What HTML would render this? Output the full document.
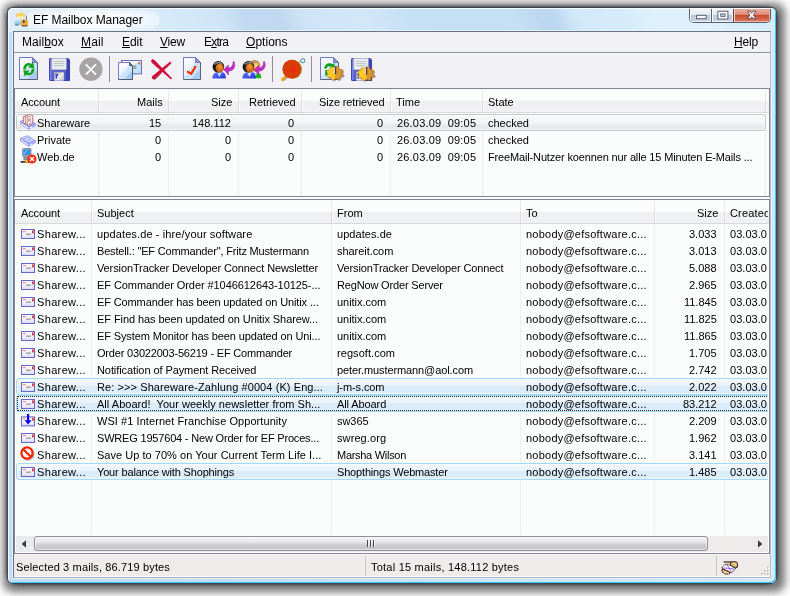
<!DOCTYPE html>
<html><head><meta charset="utf-8"><title>EF Mailbox Manager</title>
<style>
html,body{margin:0;padding:0;}
body{width:790px;height:596px;overflow:hidden;background:#fff;position:relative;font-family:"Liberation Sans",sans-serif;font-size:11px;color:#000;}
div,span,svg{position:absolute;box-sizing:border-box;}
.t{white-space:pre;line-height:14px;will-change:transform;}
u{text-decoration:underline;text-decoration-thickness:1px;text-underline-offset:1px;}
/* shadow */
.sh{left:7px;top:7px;width:770px;height:577px;border-radius:13px;box-shadow:0 0 3px .5px rgba(0,0,0,.45);}
.sh2{left:7px;top:7px;width:770px;height:577px;border-radius:4px;background:rgba(0,0,0,.55);box-shadow:2px 2px 8px 6px rgba(0,0,0,.55);}
/* window frame */
.win{left:7px;top:7px;width:770px;height:577px;border-radius:6px;border:1px solid #3f4852;
  background:#c8e0f5;overflow:hidden;}
.win:before{content:"";position:absolute;left:0;top:0;right:0;bottom:0;border-radius:5px;z-index:3;
  box-shadow:inset 1px 1px 0 #f4fbff, inset -1px -1px 0 #2ccaf8;}
.streak{left:0;top:0;width:768px;height:24px;
  background:linear-gradient(65deg,#deedf9 0,#dcecf8 10%,#d5e9f8 22%,#cfe5f7 28%,#c1daf1 31%,#c0d9f0 36%,#cfe5f7 39%,#d2e7f8 47%,#c6e0f5 52%,#c5dff4 66%,#bcd8f0 69%,#bcd8f0 71%,#d2e9f9 74%,#d6ebfa 80%,#def1fc 84%,#dff2fc 90%,#d8ecf9 94%,#d6eaf8 100%);}
.frameside{left:0;top:24px;width:768px;height:551px;background:linear-gradient(90deg,#c3dcf3 0,#c9e1f6 50%,#d5e8f8 100%);}
.frameinner{left:4px;top:22px;width:760px;height:549px;border:1px solid #e2f2fd;}
.glow{left:18px;top:2px;width:134px;height:20px;border-radius:10px;background:radial-gradient(ellipse at center,rgba(255,255,255,.9) 0,rgba(255,255,255,.78) 50%,rgba(255,255,255,.4) 75%,rgba(255,255,255,0) 100%);}
/* client */
.client{left:13px;top:31px;width:758px;height:547px;background:#f2f2f6;border:1px solid #6d7385;border-right-color:#b4bccb;border-bottom-color:#aab4c3;}
.menuline{left:14px;top:52px;width:756px;height:1px;background:#8e92a0;}
/* lists */
.lv{background:#fbfcfc;border:1px solid #80869a;}
.hdr{background:linear-gradient(180deg,#fcfdfd 0,#fbfcfc 50%,#f0f0f3 51%,#f1f1f4 100%);border-bottom:1px solid #d7dadc;}
.hs{width:2px;background:linear-gradient(180deg,#ebebef 0,#e6e7ec 50%,#d8dce6 52%,#d6dae6 100%);border-right:1px solid #fbfbfd;}
.cs{width:1px;background:#eeeff2;}
.sel0{border:1px solid #c6c8ce;border-radius:3px;background:linear-gradient(180deg,#f9f9fa 0,#f4f4f6 58%,#e9ebed 62%,#e5e7e9 100%);box-shadow:inset 0 0 0 1px rgba(255,255,255,.6);}
.sel{border:1px solid #a5d8f2;border-radius:3px;background:linear-gradient(180deg,#f0f6fc 0,#eaf3fb 49%,#d9eaf9 50%,#deeefa 100%);box-shadow:inset 0 0 0 1px rgba(255,255,255,.5);}
.foc{border:1px dotted #222;border-radius:0;}
/* scrollbar */
.sbtrack{background:#efebea;}
.sbthumb{border:1px solid #8f9096;border-radius:3px;background:linear-gradient(180deg,#f3f3f5 0,#e4e4e7 45%,#d0d1d4 55%,#bfc0c4 100%);box-shadow:inset 0 0 0 1px rgba(255,255,255,.55);}
/* status */
.status{background:#f0ecec;border-top:1px solid #f9f7f7;border-bottom:1px solid #fdfdfd;}
.ssep{width:1px;background:#c9c5c5;}
/* toolbar */
.tsep{width:1px;background:#8f8f95;}
/* caption buttons */
.cap{border:1px solid #5a6472;}

.root{left:0;top:0;width:790px;height:596px;}

</style></head>
<body>
<svg width="0" height="0" style="left:0;top:0"><defs><linearGradient id="gDoc" x1="0" y1="0" x2="1" y2="1"><stop offset="0" stop-color="#ffffff"/><stop offset=".45" stop-color="#f1f3fa"/><stop offset=".46" stop-color="#cfe7fc"/><stop offset="1" stop-color="#bcdcfa"/></linearGradient><linearGradient id="gEnv" x1="0" y1="0" x2="0" y2="1"><stop offset="0" stop-color="#fff6f7"/><stop offset=".6" stop-color="#f4f0fb"/><stop offset="1" stop-color="#d4d6f6"/></linearGradient><linearGradient id="gMetal" x1="0" y1="0" x2="1" y2="1"><stop offset="0" stop-color="#8a8c96"/><stop offset=".5" stop-color="#f4f4f4"/><stop offset="1" stop-color="#b9bbc2"/></linearGradient><radialGradient id="gFace" cx=".55" cy=".35" r=".7"><stop offset="0" stop-color="#f59a30"/><stop offset=".6" stop-color="#d8701a"/><stop offset="1" stop-color="#9a4a0c"/></radialGradient><radialGradient id="gFace2" cx=".55" cy=".35" r=".7"><stop offset="0" stop-color="#ffe08a"/><stop offset=".6" stop-color="#f0a840"/><stop offset="1" stop-color="#c07018"/></radialGradient><linearGradient id="gBody" x1="0" y1="0" x2="1" y2="1"><stop offset="0" stop-color="#6a78ff"/><stop offset="1" stop-color="#2434d8"/></linearGradient><linearGradient id="gGear" x1="0" y1="0" x2="1" y2="0"><stop offset="0" stop-color="#ffcf28"/><stop offset=".5" stop-color="#ffc420"/><stop offset=".52" stop-color="#dda032"/><stop offset="1" stop-color="#cf8a2c"/></linearGradient></defs></svg><div class="sh2"></div><div class="sh"></div><div class="win"><div class="frameside"></div><div class="streak"></div><div class="frameinner"></div><div class="glow"></div></div><svg style="left:14px;top:11.6px" width="15" height="15" viewBox="0 0 15 15" ><path d="M.6 6.2 L6.2 1 L11 5.6 V9.4 L.6 12.8Z" fill="#dcf1fc"/><path d="M.7 8.6 L6.6 8.8 V13 L1 13Z" fill="#8cc2f2"/><path d="M.7 8.6 H6.6 V10.4 H.7Z" fill="#b4dcf8"/><path d="M1.2 13 H4.4" stroke="#5a6068" stroke-width="1"/><ellipse cx="6.3" cy="3.4" rx="4.8" ry="3" fill="#f8d468"/><path d="M3 4.6 H9.4 V5.9 H3Z" fill="#fffbea"/><path d="M4 1.4 L6 .6" stroke="#fff2c0" stroke-width=".8"/><path d="M12.4 3.8 V8.4" stroke="#6a7088" stroke-width="1"/><rect x="6.8" y="7.8" width="7.2" height="6.2" rx="1.6" fill="#f2a83a"/><rect x="9" y="7.8" width="1.6" height="3.2" fill="#3a4a6a"/><path d="M7.8 13.9 H13.4" stroke="#2a2418" stroke-width="1" opacity=".85"/></svg><span class="t" style="left:32.60px;top:13.00px;font-size:12px;letter-spacing:-0.062px;">EF Mailbox Manager</span><div style="left:689px;top:8px;width:82px;height:15px;border-radius:0 0 5px 5px;border:1px solid #566070;border-top:none;overflow:hidden;background:#fff"><div style="left:0;top:0;width:21px;height:14px;background:linear-gradient(180deg,#f3f6fa 0,#e6ebf2 46%,#b9c7d8 50%,#c9d5e3 100%);box-shadow:inset 1px 0 0 #fbfcfe,inset -1px -1px 0 #f4f7fa"></div><div style="left:22px;top:0;width:21px;height:14px;background:linear-gradient(180deg,#f3f6fa 0,#e6ebf2 46%,#b9c7d8 50%,#c9d5e3 100%);box-shadow:inset 1px 0 0 #fbfcfe,inset -1px -1px 0 #f4f7fa"></div><div style="left:44px;top:0;width:36px;height:14px;background:linear-gradient(180deg,#eeb4a8 0,#de8c7c 46%,#c64a2e 50%,#cf5a3e 70%,#dc7e66 100%);box-shadow:inset 1px 0 0 #f6d2ca,inset -1px -1px 0 #ecb4a6"></div><div style="left:21px;top:0;width:1px;height:14px;background:#566070"></div><div style="left:43px;top:0;width:1px;height:14px;background:#6a3a34"></div></div><svg style="left:690px;top:8px" width="81" height="14" viewBox="0 0 81 14"><rect x="6.5" y="7.3" width="9.6" height="3.4" fill="#fff" stroke="#5a6270" stroke-width="1"/><rect x="27.9" y="3.2" width="10" height="7.8" fill="#fff" stroke="#5a6270" stroke-width="1"/><rect x="30.7" y="5.9" width="4.4" height="2.5" fill="#c3cfdd" stroke="#5a6270" stroke-width=".9"/><path d="M57.4 3.2 H60.4 L61.7 5.2 L63 3.2 H66 L63.4 7 L66 10.8 H63 L61.7 8.8 L60.4 10.8 H57.4 L60 7Z" fill="#fff" stroke="#5a4a52" stroke-width=".9" stroke-linejoin="round"/></svg><div class="client"></div><div class="menuline"></div><span class="t" style="left:21.60px;top:35px;font-size:12px;letter-spacing:0.06px">Mail<u>b</u>ox</span><span class="t" style="left:81.00px;top:35px;font-size:12px;letter-spacing:0.15px"><u>M</u>ail</span><span class="t" style="left:122.00px;top:35px;font-size:12px;letter-spacing:-0.07px"><u>E</u>dit</span><span class="t" style="left:160.00px;top:35px;font-size:12px;letter-spacing:-0.20px"><u>V</u>iew</span><span class="t" style="left:203.60px;top:35px;font-size:12px;letter-spacing:-0.75px">E<u>x</u>tra</span><span class="t" style="left:246.00px;top:35px;font-size:12px;letter-spacing:0.03px"><u>O</u>ptions</span><span class="t" style="left:734.40px;top:35px;font-size:12px;letter-spacing:-0.17px"><u>H</u>elp</span><div class="tsep" style="left:109px;top:56px;height:26px"></div><div class="tsep" style="left:272px;top:56px;height:26px"></div><div class="tsep" style="left:311px;top:56px;height:26px"></div><svg style="left:19px;top:57px" width="19" height="23" viewBox="0 0 19 23" ><path d="M.5 .5H13.5 L18.5 5.5 V22.5 H.5Z" fill="url(#gDoc)" stroke="#7478c4" stroke-width="1"/><path d="M0 0 L0 0" stroke="#a4c6f2" stroke-width="0"/><path d="M18 12.65 L18 22 L8.55 22Z" fill="#a9cbf5"/><path d="M13.5 .5 V5.5 H18.5Z" fill="#8a8fd8" stroke="#6a6ebc" stroke-width=".8"/><path d="M18.5 5.5 V22.5 H.5" fill="none" stroke="#5c6078" stroke-width="1"/><path d="M4.3 12.6 C4 7.2 9 4.6 12.4 7 L13.8 4.6 L15.4 11.2 L9.2 10.6 L10.8 8.8 C9 7.8 6.9 9 6.9 12.6Z" fill="#10a01c"/><path d="M15.3 11.8 C15.6 17.2 10.6 19.8 7.2 17.4 L5.8 19.8 L4.2 13.2 L10.4 13.8 L8.8 15.6 C10.6 16.6 12.7 15.4 12.7 11.8Z" fill="#10a01c"/></svg><svg style="left:49px;top:57.5px" width="22" height="23" viewBox="0 0 22 23" ><g transform="scale(.955,1)"><path d="M1.2 .5H20 L21.5 2 V22.5 H1.2 Q.5 22.5 .5 21.8 V1.2Q.5 .5 1.2 .5Z" fill="#5a62cc" stroke="#3a3eaa" stroke-width="1"/><rect x="17.6" y="1" width="3.4" height="21" fill="#3c42b0"/><rect x="1" y="1" width="1.6" height="21" fill="#7880e4"/><rect x="3" y=".5" width="15" height="11" fill="#e9edef" stroke="#c7cbd0" stroke-width=".6"/><path d="M5 3.6H16M5 5.6H16M5 7.6H16" stroke="#b9bcc2" stroke-width=".9"/><rect x="6" y="14.5" width="9.4" height="8" fill="url(#gMetal)" stroke="#d8d8dc" stroke-width=".5"/><path d="M7 16 H9.6 L8 21 H7Z" fill="#3a44d8"/></g></svg><svg style="left:78.6px;top:56.6px" width="24" height="25" viewBox="0 0 24 25" ><circle cx="11.9" cy="12.2" r="11.6" fill="#a6a4a4"/><path d="M6.8 7.4 L17 17.6 M17 7.4 L6.8 17.6" stroke="#fff" stroke-width="1.9"/></svg><svg style="left:118px;top:60px" width="25" height="21" viewBox="0 0 25 21" ><rect x="3.5" y=".5" width="20" height="13.4" fill="url(#gDoc)" stroke="#6b6dba"/><rect x="20.2" y="2.4" width="2" height="2" fill="#e85a20"/><path d="M15 6.2H18.4M15 8.2H18.4" stroke="#6a6a72" stroke-width=".9"/><path d="M.5 2.5H11.5 L14.5 5.5 V19.5 H.5Z" fill="url(#gDoc)" stroke="#7a7cc8"/><path d="M14 11 V19 H7Z" fill="#a6c9f5"/><path d="M11.5 2.5 V5.5 H14.5Z" fill="#3a80e8" stroke="#4a4e5c" stroke-width=".9"/><path d="M14.5 5.5 V19.5 H.5" fill="none" stroke="#555a6c" stroke-width="1"/></svg><svg style="left:150px;top:58px" width="23" height="23" viewBox="0 0 23 23" ><path d="M1.2 2.8 C1.3 1.2 3.2 .8 4.2 1.8 L22.2 20.4 L21 21.6 L2 5 C1.4 4.4 1.1 3.6 1.2 2.8Z" fill="#d40a3c"/><path d="M20.2 3.6 L21.4 4.8 L5.8 20.4 C4.8 21.6 3 21.8 2.2 20.6 C1.5 19.6 2 18.4 2.8 17.8Z" fill="#d40a3c"/><path d="M4 21.4 L6.4 20.4 L11.6 15" stroke="#5a2a34" stroke-width=".8" fill="none" opacity=".6"/><path d="M21.4 5.2 L16.4 10.2" stroke="#5a2a34" stroke-width=".7" fill="none" opacity=".6"/></svg><svg style="left:183px;top:57px" width="18" height="23" viewBox="0 0 18 23" ><path d="M.5 .5H12.5 L17.5 5.5 V22.5 H.5Z" fill="url(#gDoc)" stroke="#7478c4" stroke-width="1"/><path d="M0 0 L0 0" stroke="#a4c6f2" stroke-width="0"/><path d="M17 12.65 L17 22 L8.1 22Z" fill="#a9cbf5"/><path d="M12.5 .5 V5.5 H17.5Z" fill="#8a8fd8" stroke="#6a6ebc" stroke-width=".8"/><path d="M17.5 5.5 V22.5 H.5" fill="none" stroke="#5c6078" stroke-width="1"/><path d="M4 14.4 L8.2 16.8 L12.8 9" fill="none" stroke="#ff2c00" stroke-width="2.2"/></svg><svg style="left:211.6px;top:60.8px" width="24" height="19" viewBox="0 0 24 19" ><g transform="translate(0,0)"><path d="M.4 17.6 C.4 13.4 2.4 11.4 6 11 H9.6 C12.6 11.4 13.8 13.4 13.8 17.6Z" fill="url(#gBody)"/><path d="M5 11 L7.4 16 L9.8 11Z" fill="#cfe6ff"/><circle cx="6.4" cy="5.8" r="5.8" fill="#161616"/><path d="M2.6 3.4 C4 1.2 8 1 10 2.6" stroke="#9a9a9a" stroke-width="1.3" fill="none"/><ellipse cx="7.6" cy="7" rx="4" ry="4.6" fill="url(#gFace)"/></g><g transform="translate(11.8,0.4)"><path d="M10.2 0 C12.6 5.4 9.4 9.6 4.6 9.8 V13.6 L0 8.2 L4.6 3.6 V6.6 C8 6.4 9.6 4 9.2 .4Z" fill="#c22cc2" stroke="#a020a8" stroke-width=".5"/></g></svg><svg style="left:241.8px;top:59.8px" width="25" height="20" viewBox="0 0 25 20" ><path d="M12 18.2 V13 H15.6 C18 13 19.4 14.6 19.4 18.2Z" fill="#18b41c"/><g transform="translate(6.2,0)"><path d="M.4 17.6 C.4 13.4 2.4 11.4 6 11 H9.6 C12.6 11.4 13.8 13.4 13.8 17.6Z" fill="none"/><path d="M5 11 L7.4 16 L9.8 11Z" fill="#cfe6ff"/><circle cx="6.4" cy="5.8" r="5.8" fill="#c88a30"/><path d="M2.6 3.4 C4 1.2 8 1 10 2.6" stroke="#9a9a9a" stroke-width="1.3" fill="none"/><ellipse cx="7.6" cy="7" rx="4" ry="4.6" fill="url(#gFace2)"/></g><g transform="translate(0,1)"><path d="M.4 17.6 C.4 13.4 2.4 11.4 6 11 H9.6 C12.6 11.4 13.8 13.4 13.8 17.6Z" fill="url(#gBody)"/><path d="M5 11 L7.4 16 L9.8 11Z" fill="#cfe6ff"/><circle cx="6.4" cy="5.8" r="5.8" fill="#161616"/><path d="M2.6 3.4 C4 1.2 8 1 10 2.6" stroke="#9a9a9a" stroke-width="1.3" fill="none"/><ellipse cx="7.6" cy="7" rx="4" ry="4.6" fill="url(#gFace)"/></g><g transform="translate(12.2,1.4)"><path d="M10.2 0 C12.6 5.4 9.4 9.6 4.6 9.8 V13.6 L0 8.2 L4.6 3.6 V6.6 C8 6.4 9.6 4 9.2 .4Z" fill="#c22cc2" stroke="#a020a8" stroke-width=".5"/></g></svg><svg style="left:280.6px;top:57.6px" width="25" height="24" viewBox="0 0 25 24" ><path d="M7.2 16.4 L1.7 21.6" stroke="#f5a522" stroke-width="3.2" stroke-linecap="round"/><path d="M8 17.6 L2.8 22.6" stroke="#8878a0" stroke-width=".9"/><circle cx="11.2" cy="11.4" r="9.7" fill="#b27a1c"/><circle cx="10.7" cy="10.9" r="9.2" fill="#d83c04"/><circle cx="13.4" cy="9.4" r="1.5" fill="#ff1e1e" opacity=".85"/><circle cx="11.4" cy="12.4" r="1.6" fill="#ff1e1e" opacity=".85"/><circle cx="14" cy="12.6" r="1.2" fill="#ff1e1e" opacity=".8"/><circle cx="9" cy="11.6" r="1" fill="#ff1e1e" opacity=".7"/><path d="M17.8 4.6 L20.4 2.4" stroke="#8a8a90" stroke-width=".8"/><circle cx="21.8" cy="2.7" r="2.1" fill="#f4fbff" stroke="#2b7c8c" stroke-width=".9"/></svg><svg style="left:320px;top:57px" width="26" height="25" viewBox="0 0 26 25" ><path d="M.5 .5H13.5 L18.5 5.5 V22.5 H.5Z" fill="url(#gDoc)" stroke="#7478c4" stroke-width="1"/><path d="M0 0 L0 0" stroke="#a4c6f2" stroke-width="0"/><path d="M18 12.65 L18 22 L8.55 22Z" fill="#a9cbf5"/><path d="M13.5 .5 V5.5 H18.5Z" fill="#8a8fd8" stroke="#6a6ebc" stroke-width=".8"/><path d="M18.5 5.5 V22.5 H.5" fill="none" stroke="#5c6078" stroke-width="1"/><path d="M4.2 11.6 C4.6 7 9.4 4.8 13.2 7.6 L14.6 5.8 V11.6 H9.4 L11 9.8 C9 8.6 6.8 9.6 6.4 11.8Z" fill="#10a01c"/><path d="M5.2 13 H7.6 V18.6 H5.2Z" fill="#10a01c"/><path d="M23.14 17.59 L22.67 18.83 L20.52 19.23 L19.70 20.03 L19.61 21.79 L18.18 22.40 L16.30 21.48 L15.00 21.58 L13.38 22.77 L11.82 22.40 L11.31 20.69 L10.30 20.03 L8.10 19.97 L7.33 18.83 L8.49 17.33 L8.36 16.30 L6.86 15.01 L7.33 13.77 L9.48 13.37 L10.30 12.57 L10.39 10.81 L11.82 10.20 L13.70 11.12 L15.00 11.02 L16.62 9.83 L18.18 10.20 L18.69 11.91 L19.70 12.57 L21.90 12.63 L22.67 13.77 L21.51 15.27 L21.64 16.30Z" fill="#4a4038" stroke="#4a4038" stroke-width="1" stroke-linejoin="round" opacity=".5" transform="translate(1.1,1)"/><path d="M23.14 17.59 L22.67 18.83 L20.52 19.23 L19.70 20.03 L19.61 21.79 L18.18 22.40 L16.30 21.48 L15.00 21.58 L13.38 22.77 L11.82 22.40 L11.31 20.69 L10.30 20.03 L8.10 19.97 L7.33 18.83 L8.49 17.33 L8.36 16.30 L6.86 15.01 L7.33 13.77 L9.48 13.37 L10.30 12.57 L10.39 10.81 L11.82 10.20 L13.70 11.12 L15.00 11.02 L16.62 9.83 L18.18 10.20 L18.69 11.91 L19.70 12.57 L21.90 12.63 L22.67 13.77 L21.51 15.27 L21.64 16.30Z" fill="url(#gGear)" stroke="url(#gGear)" stroke-width="1" stroke-linejoin="round"/><path d="M23.14 17.59 L22.67 18.83 L20.52 19.23 L19.70 20.03 L19.61 21.79 L18.18 22.40 L16.30 21.48 L15.00 21.58 L13.38 22.77 L11.82 22.40 L11.31 20.69 L10.30 20.03 L8.10 19.97 L7.33 18.83 L8.49 17.33 L8.36 16.30 L6.86 15.01 L7.33 13.77 L9.48 13.37 L10.30 12.57 L10.39 10.81 L11.82 10.20 L13.70 11.12 L15.00 11.02 L16.62 9.83 L18.18 10.20 L18.69 11.91 L19.70 12.57 L21.90 12.63 L22.67 13.77 L21.51 15.27 L21.64 16.30Z" fill="none" stroke="#b4552a" stroke-width=".5" stroke-linejoin="round" opacity=".55" transform="translate(15.00,16.30) scale(1.06) translate(-15.00,-16.30)"/><rect x="14.80" y="9.30" width="1.5" height="7.80" fill="#6a3420"/><rect x="13.50" y="10.30" width="1.3" height="6.00" fill="#dcdcde"/></svg><svg style="left:351px;top:57.5px" width="26" height="25" viewBox="0 0 26 25" ><g transform="scale(.955,1)"><path d="M1.2 .5H20 L21.5 2 V22.5 H1.2 Q.5 22.5 .5 21.8 V1.2Q.5 .5 1.2 .5Z" fill="#5a62cc" stroke="#3a3eaa" stroke-width="1"/><rect x="17.6" y="1" width="3.4" height="21" fill="#3c42b0"/><rect x="1" y="1" width="1.6" height="21" fill="#7880e4"/><rect x="3" y=".5" width="15" height="11" fill="#e9edef" stroke="#c7cbd0" stroke-width=".6"/><path d="M5 3.6H16M5 5.6H16M5 7.6H16" stroke="#b9bcc2" stroke-width=".9"/><rect x="6" y="14.5" width="9.4" height="8" fill="url(#gMetal)" stroke="#d8d8dc" stroke-width=".5"/><path d="M7 16 H9.6 L8 21 H7Z" fill="#3a44d8"/></g><path d="M23.14 17.09 L22.67 18.33 L20.52 18.73 L19.70 19.53 L19.61 21.29 L18.18 21.90 L16.30 20.98 L15.00 21.08 L13.38 22.27 L11.82 21.90 L11.31 20.19 L10.30 19.53 L8.10 19.47 L7.33 18.33 L8.49 16.83 L8.36 15.80 L6.86 14.51 L7.33 13.27 L9.48 12.87 L10.30 12.07 L10.39 10.31 L11.82 9.70 L13.70 10.62 L15.00 10.52 L16.62 9.33 L18.18 9.70 L18.69 11.41 L19.70 12.07 L21.90 12.13 L22.67 13.27 L21.51 14.77 L21.64 15.80Z" fill="#4a4038" stroke="#4a4038" stroke-width="1" stroke-linejoin="round" opacity=".5" transform="translate(1.1,1)"/><path d="M23.14 17.09 L22.67 18.33 L20.52 18.73 L19.70 19.53 L19.61 21.29 L18.18 21.90 L16.30 20.98 L15.00 21.08 L13.38 22.27 L11.82 21.90 L11.31 20.19 L10.30 19.53 L8.10 19.47 L7.33 18.33 L8.49 16.83 L8.36 15.80 L6.86 14.51 L7.33 13.27 L9.48 12.87 L10.30 12.07 L10.39 10.31 L11.82 9.70 L13.70 10.62 L15.00 10.52 L16.62 9.33 L18.18 9.70 L18.69 11.41 L19.70 12.07 L21.90 12.13 L22.67 13.27 L21.51 14.77 L21.64 15.80Z" fill="url(#gGear)" stroke="url(#gGear)" stroke-width="1" stroke-linejoin="round"/><path d="M23.14 17.09 L22.67 18.33 L20.52 18.73 L19.70 19.53 L19.61 21.29 L18.18 21.90 L16.30 20.98 L15.00 21.08 L13.38 22.27 L11.82 21.90 L11.31 20.19 L10.30 19.53 L8.10 19.47 L7.33 18.33 L8.49 16.83 L8.36 15.80 L6.86 14.51 L7.33 13.27 L9.48 12.87 L10.30 12.07 L10.39 10.31 L11.82 9.70 L13.70 10.62 L15.00 10.52 L16.62 9.33 L18.18 9.70 L18.69 11.41 L19.70 12.07 L21.90 12.13 L22.67 13.27 L21.51 14.77 L21.64 15.80Z" fill="none" stroke="#b4552a" stroke-width=".5" stroke-linejoin="round" opacity=".55" transform="translate(15.00,15.80) scale(1.06) translate(-15.00,-15.80)"/><rect x="14.80" y="8.80" width="1.5" height="7.80" fill="#6a3420"/><rect x="13.50" y="9.80" width="1.3" height="6.00" fill="#dcdcde"/></svg><div class="lv" style="left:14px;top:88px;width:756px;height:109px"></div><div class="hdr" style="left:15px;top:89px;width:754px;height:24px"></div><div class="hs" style="left:98px;top:89px;height:23px"></div><div class="cs" style="left:98px;top:113px;height:83px"></div><div class="hs" style="left:168px;top:89px;height:23px"></div><div class="cs" style="left:168px;top:113px;height:83px"></div><div class="hs" style="left:238px;top:89px;height:23px"></div><div class="cs" style="left:238px;top:113px;height:83px"></div><div class="hs" style="left:301px;top:89px;height:23px"></div><div class="cs" style="left:301px;top:113px;height:83px"></div><div class="hs" style="left:390px;top:89px;height:23px"></div><div class="cs" style="left:390px;top:113px;height:83px"></div><div class="hs" style="left:482px;top:89px;height:23px"></div><div class="cs" style="left:482px;top:113px;height:83px"></div><div class="hs" style="left:765px;top:89px;height:23px"></div><div class="cs" style="left:765px;top:113px;height:83px"></div><span class="t" style="left:20.90px;top:95.00px;font-size:11px;letter-spacing:-0.107px;">Account</span><span class="t" style="left:137.23px;top:95.00px;font-size:11px;">Mails</span><span class="t" style="left:211.49px;top:95.00px;font-size:11px;">Size</span><span class="t" style="left:249.25px;top:95.00px;font-size:11px;letter-spacing:-0.053px;">Retrieved</span><span class="t" style="left:319.37px;top:95.00px;font-size:11px;letter-spacing:-0.133px;">Size retrieved</span><span class="t" style="left:396.30px;top:95.00px;font-size:11px;">Time</span><span class="t" style="left:488.00px;top:95.00px;font-size:11px;">State</span><div class="sel0" style="left:16px;top:114px;width:750px;height:17px"></div><svg style="left:20px;top:114px" width="17" height="17" viewBox="0 0 17 17" ><g transform="translate(0,4.1)"><path d="M0 2.9 L7.5 .2 L15.9 5.4 V8 L8.4 11.7 L0 6Z" fill="#9a9cff"/><path d="M1.6 3.2 L7.4 1.2 L14 5.3 L8.4 7.6Z" fill="#c4dcfb"/><path d="M3.6 3.6 L7.6 2.2 L11.4 4.4 L7.6 6Z" fill="#a4a8ff"/><path d="M5.4 3.9 L7.7 3.1 L9.6 4.2 L7.6 5Z" fill="#dcecff"/><path d="M.8 4.3 L8 9.2 V10.6 L.8 5.6Z" fill="#eef4ff"/><path d="M9 9.3 L15.2 6.3 V7.4 L9 10.6Z" fill="#b9bcff"/><path d="M10 9.4 L12 8.5 V9.4 L10 10.3Z" fill="#fff"/></g><path d="M3.3 2.6 L6.4 1.4 L10.4 .5 L12.8 1.6 V9.6 L8.6 11 L3.3 9Z" fill="#fdf8f8" stroke="#b06464" stroke-width=".9"/><path d="M5.3 2 V9.6 M7.2 1.4 V10.2" stroke="#b06464" stroke-width=".8" fill="none"/><path d="M7.2 3 L10.6 2.2 V9.8" stroke="#c08a8a" stroke-width=".7" fill="none"/><path d="M9 4.6 V7.4" stroke="#d23a7a" stroke-width="1"/></svg><svg style="left:20px;top:135px" width="17" height="12" viewBox="0 0 17 12" ><g transform="translate(0,0)"><path d="M0 2.9 L7.5 .2 L15.9 5.4 V8 L8.4 11.7 L0 6Z" fill="#9a9cff"/><path d="M1.6 3.2 L7.4 1.2 L14 5.3 L8.4 7.6Z" fill="#c4dcfb"/><path d="M3.6 3.6 L7.6 2.2 L11.4 4.4 L7.6 6Z" fill="#a4a8ff"/><path d="M5.4 3.9 L7.7 3.1 L9.6 4.2 L7.6 5Z" fill="#dcecff"/><path d="M.8 4.3 L8 9.2 V10.6 L.8 5.6Z" fill="#eef4ff"/><path d="M9 9.3 L15.2 6.3 V7.4 L9 10.6Z" fill="#b9bcff"/><path d="M10 9.4 L12 8.5 V9.4 L10 10.3Z" fill="#fff"/></g></svg><svg style="left:20px;top:148px" width="17" height="16" viewBox="0 0 17 16" ><rect x="2.6" y=".6" width="8.4" height="8" rx="1" fill="#9aa2b4" stroke="#6a7288" stroke-width=".7"/><rect x="3.6" y="1.6" width="6.4" height="5.4" fill="#2a92f2"/><path d="M4 6 L7 2.4" stroke="#9ad4ff" stroke-width="1"/><rect x="3.4" y="9" width="6" height="3.4" fill="#8a8ea0"/><rect x=".6" y="13" width="11" height="1.8" fill="#3c3c44"/><rect x="5" y="12" width="3" height="2.6" fill="#f0b020"/><circle cx="12" cy="11" r="4.6" fill="#ff2a12"/><path d="M10 9 L14 13 M14 9 L10 13" stroke="#fff" stroke-width="1.5"/></svg><span class="t" style="left:36.70px;top:116.00px;font-size:11px;">Shareware</span><span class="t" style="left:148.65px;top:116.00px;font-size:11px;">15</span><span class="t" style="left:192.35px;top:116.00px;font-size:11px;">148.112</span><span class="t" style="left:287.77px;top:116.00px;font-size:11px;">0</span><span class="t" style="left:376.77px;top:116.00px;font-size:11px;">0</span><span class="t" style="left:396.60px;top:116.00px;font-size:11px;letter-spacing:0.182px;">26.03.09  09:05</span><span class="t" style="left:488.00px;top:116.00px;font-size:11px;">checked</span><span class="t" style="left:36.70px;top:133.00px;font-size:11px;">Private</span><span class="t" style="left:154.78px;top:133.00px;font-size:11px;">0</span><span class="t" style="left:225.18px;top:133.00px;font-size:11px;">0</span><span class="t" style="left:287.77px;top:133.00px;font-size:11px;">0</span><span class="t" style="left:376.77px;top:133.00px;font-size:11px;">0</span><span class="t" style="left:396.60px;top:133.00px;font-size:11px;letter-spacing:0.182px;">26.03.09  09:05</span><span class="t" style="left:488.00px;top:133.00px;font-size:11px;">checked</span><span class="t" style="left:36.70px;top:150.00px;font-size:11px;">Web.de</span><span class="t" style="left:154.78px;top:150.00px;font-size:11px;">0</span><span class="t" style="left:225.18px;top:150.00px;font-size:11px;">0</span><span class="t" style="left:287.77px;top:150.00px;font-size:11px;">0</span><span class="t" style="left:376.77px;top:150.00px;font-size:11px;">0</span><span class="t" style="left:396.60px;top:150.00px;font-size:11px;letter-spacing:0.182px;">26.03.09  09:05</span><span class="t" style="left:488.00px;top:150.00px;font-size:11px;letter-spacing:-0.151px;">FreeMail-Nutzer koennen nur alle 15 Minuten E-Mails ...</span><div style="left:15px;top:197px;width:755px;height:2px;background:#fdfdfe"></div><div class="lv" style="left:14px;top:199px;width:756px;height:355px"></div><div class="hdr" style="left:15px;top:200px;width:754px;height:24px"></div><div class="hs" style="left:91px;top:200px;height:23px"></div><div class="cs" style="left:91px;top:224px;height:311px"></div><div class="hs" style="left:331px;top:200px;height:23px"></div><div class="cs" style="left:331px;top:224px;height:311px"></div><div class="hs" style="left:520px;top:200px;height:23px"></div><div class="cs" style="left:520px;top:224px;height:311px"></div><div class="hs" style="left:654px;top:200px;height:23px"></div><div class="cs" style="left:654px;top:224px;height:311px"></div><div class="hs" style="left:724px;top:200px;height:23px"></div><div class="cs" style="left:724px;top:224px;height:311px"></div><span class="t" style="left:20.90px;top:206.00px;font-size:11px;letter-spacing:-0.107px;">Account</span><span class="t" style="left:96.90px;top:206.00px;font-size:11px;">Subject</span><span class="t" style="left:337.00px;top:206.00px;font-size:11px;">From</span><span class="t" style="left:526.00px;top:206.00px;font-size:11px;">To</span><span class="t" style="left:697.49px;top:206.00px;font-size:11px;">Size</span><div style="left:725px;top:200px;width:43px;height:24px;overflow:hidden"><span class="t" style="left:5.10px;top:6.00px;font-size:11px;letter-spacing:0.151px;">Created</span></div><div style="left:15px;top:224px;width:753px;height:311px;overflow:hidden"><div class="sel" style="left:1px;top:154px;width:770px;height:17px"></div><div class="sel" style="left:1px;top:171px;width:770px;height:17px"></div><div class="sel" style="left:1px;top:239px;width:770px;height:17px"></div><div class="foc" style="left:2px;top:172px;width:770px;height:15px"></div></div><svg style="left:21px;top:229px" width="14" height="10" viewBox="0 0 14 10" ><rect x=".5" y=".5" width="13" height="9" fill="url(#gEnv)" stroke="#6668cc"/><rect x="11" y="1.4" width="1.8" height="3" fill="#e23c3c"/><rect x="2" y="2" width="2.6" height="1.2" fill="#f28a8a"/><rect x="5" y="4.6" width="5" height="1.1" fill="#8a8a90"/></svg><span class="t" style="left:36.70px;top:227.00px;font-size:11px;letter-spacing:0.349px;">Sharew...</span><span class="t" style="left:96.90px;top:227.00px;font-size:11px;letter-spacing:0.121px;">updates.de - ihre/your software</span><span class="t" style="left:337.00px;top:227.00px;font-size:11px;letter-spacing:0.056px;">updates.de</span><span class="t" style="left:526.00px;top:227.00px;font-size:11px;letter-spacing:0.230px;">nobody@efsoftware.c...</span><span class="t" style="left:689.07px;top:227.00px;font-size:11px;">3.033</span><div style="left:725px;top:225px;width:43px;height:17px;overflow:hidden"><span class="t" style="left:5.10px;top:2.00px;font-size:11px;letter-spacing:0.042px;">03.03.0</span></div><svg style="left:21px;top:246px" width="14" height="10" viewBox="0 0 14 10" ><rect x=".5" y=".5" width="13" height="9" fill="url(#gEnv)" stroke="#6668cc"/><rect x="11" y="1.4" width="1.8" height="3" fill="#e23c3c"/><rect x="2" y="2" width="2.6" height="1.2" fill="#f28a8a"/><rect x="5" y="4.6" width="5" height="1.1" fill="#8a8a90"/></svg><span class="t" style="left:36.70px;top:244.00px;font-size:11px;letter-spacing:0.349px;">Sharew...</span><span class="t" style="left:96.90px;top:244.00px;font-size:11px;letter-spacing:-0.174px;">Bestell.: "EF Commander", Fritz Mustermann</span><span class="t" style="left:337.00px;top:244.00px;font-size:11px;letter-spacing:-0.051px;">shareit.com</span><span class="t" style="left:526.00px;top:244.00px;font-size:11px;letter-spacing:0.230px;">nobody@efsoftware.c...</span><span class="t" style="left:689.07px;top:244.00px;font-size:11px;">3.013</span><div style="left:725px;top:242px;width:43px;height:17px;overflow:hidden"><span class="t" style="left:5.10px;top:2.00px;font-size:11px;letter-spacing:0.042px;">03.03.0</span></div><svg style="left:21px;top:263px" width="14" height="10" viewBox="0 0 14 10" ><rect x=".5" y=".5" width="13" height="9" fill="url(#gEnv)" stroke="#6668cc"/><rect x="11" y="1.4" width="1.8" height="3" fill="#e23c3c"/><rect x="2" y="2" width="2.6" height="1.2" fill="#f28a8a"/><rect x="5" y="4.6" width="5" height="1.1" fill="#8a8a90"/></svg><span class="t" style="left:36.70px;top:261.00px;font-size:11px;letter-spacing:0.349px;">Sharew...</span><span class="t" style="left:96.90px;top:261.00px;font-size:11px;letter-spacing:-0.112px;">VersionTracker Developer Connect Newsletter</span><span class="t" style="left:337.00px;top:261.00px;font-size:11px;letter-spacing:-0.137px;">VersionTracker Developer Connect</span><span class="t" style="left:526.00px;top:261.00px;font-size:11px;letter-spacing:0.230px;">nobody@efsoftware.c...</span><span class="t" style="left:689.07px;top:261.00px;font-size:11px;">5.088</span><div style="left:725px;top:259px;width:43px;height:17px;overflow:hidden"><span class="t" style="left:5.10px;top:2.00px;font-size:11px;letter-spacing:0.042px;">03.03.0</span></div><svg style="left:21px;top:280px" width="14" height="10" viewBox="0 0 14 10" ><rect x=".5" y=".5" width="13" height="9" fill="url(#gEnv)" stroke="#6668cc"/><rect x="11" y="1.4" width="1.8" height="3" fill="#e23c3c"/><rect x="2" y="2" width="2.6" height="1.2" fill="#f28a8a"/><rect x="5" y="4.6" width="5" height="1.1" fill="#8a8a90"/></svg><span class="t" style="left:36.70px;top:278.00px;font-size:11px;letter-spacing:0.349px;">Sharew...</span><span class="t" style="left:96.90px;top:278.00px;font-size:11px;letter-spacing:-0.071px;">EF Commander Order #1046612643-10125-...</span><span class="t" style="left:337.00px;top:278.00px;font-size:11px;letter-spacing:-0.165px;">RegNow Order Server</span><span class="t" style="left:526.00px;top:278.00px;font-size:11px;letter-spacing:0.230px;">nobody@efsoftware.c...</span><span class="t" style="left:689.07px;top:278.00px;font-size:11px;">2.965</span><div style="left:725px;top:276px;width:43px;height:17px;overflow:hidden"><span class="t" style="left:5.10px;top:2.00px;font-size:11px;letter-spacing:0.042px;">03.03.0</span></div><svg style="left:21px;top:297px" width="14" height="10" viewBox="0 0 14 10" ><rect x=".5" y=".5" width="13" height="9" fill="url(#gEnv)" stroke="#6668cc"/><rect x="11" y="1.4" width="1.8" height="3" fill="#e23c3c"/><rect x="2" y="2" width="2.6" height="1.2" fill="#f28a8a"/><rect x="5" y="4.6" width="5" height="1.1" fill="#8a8a90"/></svg><span class="t" style="left:36.70px;top:295.00px;font-size:11px;letter-spacing:0.349px;">Sharew...</span><span class="t" style="left:96.90px;top:295.00px;font-size:11px;letter-spacing:-0.120px;">EF Commander has been updated on Unitix ...</span><span class="t" style="left:337.00px;top:295.00px;font-size:11px;letter-spacing:-0.033px;">unitix.com</span><span class="t" style="left:526.00px;top:295.00px;font-size:11px;letter-spacing:0.230px;">nobody@efsoftware.c...</span><span class="t" style="left:683.77px;top:295.00px;font-size:11px;">11.845</span><div style="left:725px;top:293px;width:43px;height:17px;overflow:hidden"><span class="t" style="left:5.10px;top:2.00px;font-size:11px;letter-spacing:0.042px;">03.03.0</span></div><svg style="left:21px;top:314px" width="14" height="10" viewBox="0 0 14 10" ><rect x=".5" y=".5" width="13" height="9" fill="url(#gEnv)" stroke="#6668cc"/><rect x="11" y="1.4" width="1.8" height="3" fill="#e23c3c"/><rect x="2" y="2" width="2.6" height="1.2" fill="#f28a8a"/><rect x="5" y="4.6" width="5" height="1.1" fill="#8a8a90"/></svg><span class="t" style="left:36.70px;top:312.00px;font-size:11px;letter-spacing:0.349px;">Sharew...</span><span class="t" style="left:96.90px;top:312.00px;font-size:11px;letter-spacing:-0.078px;">EF Find has been updated on Unitix Sharew...</span><span class="t" style="left:337.00px;top:312.00px;font-size:11px;letter-spacing:-0.033px;">unitix.com</span><span class="t" style="left:526.00px;top:312.00px;font-size:11px;letter-spacing:0.230px;">nobody@efsoftware.c...</span><span class="t" style="left:683.77px;top:312.00px;font-size:11px;">11.825</span><div style="left:725px;top:310px;width:43px;height:17px;overflow:hidden"><span class="t" style="left:5.10px;top:2.00px;font-size:11px;letter-spacing:0.042px;">03.03.0</span></div><svg style="left:21px;top:331px" width="14" height="10" viewBox="0 0 14 10" ><rect x=".5" y=".5" width="13" height="9" fill="url(#gEnv)" stroke="#6668cc"/><rect x="11" y="1.4" width="1.8" height="3" fill="#e23c3c"/><rect x="2" y="2" width="2.6" height="1.2" fill="#f28a8a"/><rect x="5" y="4.6" width="5" height="1.1" fill="#8a8a90"/></svg><span class="t" style="left:36.70px;top:329.00px;font-size:11px;letter-spacing:0.349px;">Sharew...</span><span class="t" style="left:96.90px;top:329.00px;font-size:11px;letter-spacing:-0.120px;">EF System Monitor has been updated on Uni...</span><span class="t" style="left:337.00px;top:329.00px;font-size:11px;letter-spacing:-0.033px;">unitix.com</span><span class="t" style="left:526.00px;top:329.00px;font-size:11px;letter-spacing:0.230px;">nobody@efsoftware.c...</span><span class="t" style="left:683.77px;top:329.00px;font-size:11px;">11.865</span><div style="left:725px;top:327px;width:43px;height:17px;overflow:hidden"><span class="t" style="left:5.10px;top:2.00px;font-size:11px;letter-spacing:0.042px;">03.03.0</span></div><svg style="left:21px;top:348px" width="14" height="10" viewBox="0 0 14 10" ><rect x=".5" y=".5" width="13" height="9" fill="url(#gEnv)" stroke="#6668cc"/><rect x="11" y="1.4" width="1.8" height="3" fill="#e23c3c"/><rect x="2" y="2" width="2.6" height="1.2" fill="#f28a8a"/><rect x="5" y="4.6" width="5" height="1.1" fill="#8a8a90"/></svg><span class="t" style="left:36.70px;top:346.00px;font-size:11px;letter-spacing:0.349px;">Sharew...</span><span class="t" style="left:96.90px;top:346.00px;font-size:11px;letter-spacing:-0.191px;">Order 03022003-56219 - EF Commander</span><span class="t" style="left:337.00px;top:346.00px;font-size:11px;letter-spacing:0.057px;">regsoft.com</span><span class="t" style="left:526.00px;top:346.00px;font-size:11px;letter-spacing:0.230px;">nobody@efsoftware.c...</span><span class="t" style="left:689.07px;top:346.00px;font-size:11px;">1.705</span><div style="left:725px;top:344px;width:43px;height:17px;overflow:hidden"><span class="t" style="left:5.10px;top:2.00px;font-size:11px;letter-spacing:0.042px;">03.03.0</span></div><svg style="left:21px;top:365px" width="14" height="10" viewBox="0 0 14 10" ><rect x=".5" y=".5" width="13" height="9" fill="url(#gEnv)" stroke="#6668cc"/><rect x="11" y="1.4" width="1.8" height="3" fill="#e23c3c"/><rect x="2" y="2" width="2.6" height="1.2" fill="#f28a8a"/><rect x="5" y="4.6" width="5" height="1.1" fill="#8a8a90"/></svg><span class="t" style="left:36.70px;top:363.00px;font-size:11px;letter-spacing:0.349px;">Sharew...</span><span class="t" style="left:96.90px;top:363.00px;font-size:11px;letter-spacing:-0.082px;">Notification of Payment Received</span><span class="t" style="left:337.00px;top:363.00px;font-size:11px;letter-spacing:-0.098px;">peter.mustermann@aol.com</span><span class="t" style="left:526.00px;top:363.00px;font-size:11px;letter-spacing:0.230px;">nobody@efsoftware.c...</span><span class="t" style="left:689.07px;top:363.00px;font-size:11px;">2.742</span><div style="left:725px;top:361px;width:43px;height:17px;overflow:hidden"><span class="t" style="left:5.10px;top:2.00px;font-size:11px;letter-spacing:0.042px;">03.03.0</span></div><svg style="left:21px;top:382px" width="14" height="10" viewBox="0 0 14 10" ><rect x=".5" y=".5" width="13" height="9" fill="url(#gEnv)" stroke="#6668cc"/><rect x="11" y="1.4" width="1.8" height="3" fill="#e23c3c"/><rect x="2" y="2" width="2.6" height="1.2" fill="#f28a8a"/><rect x="5" y="4.6" width="5" height="1.1" fill="#8a8a90"/></svg><span class="t" style="left:36.70px;top:380.00px;font-size:11px;letter-spacing:0.349px;">Sharew...</span><span class="t" style="left:96.90px;top:380.00px;font-size:11px;letter-spacing:0.089px;">Re: &gt;&gt;&gt; Shareware-Zahlung #0004 (K) Eng...</span><span class="t" style="left:337.00px;top:380.00px;font-size:11px;letter-spacing:-0.098px;">j-m-s.com</span><span class="t" style="left:526.00px;top:380.00px;font-size:11px;letter-spacing:0.230px;">nobody@efsoftware.c...</span><span class="t" style="left:689.07px;top:380.00px;font-size:11px;">2.022</span><div style="left:725px;top:378px;width:43px;height:17px;overflow:hidden"><span class="t" style="left:5.10px;top:2.00px;font-size:11px;letter-spacing:0.042px;">03.03.0</span></div><svg style="left:21px;top:399px" width="14" height="10" viewBox="0 0 14 10" ><rect x=".5" y=".5" width="13" height="9" fill="url(#gEnv)" stroke="#6668cc"/><rect x="11" y="1.4" width="1.8" height="3" fill="#e23c3c"/><rect x="2" y="2" width="2.6" height="1.2" fill="#f28a8a"/><rect x="5" y="4.6" width="5" height="1.1" fill="#8a8a90"/></svg><span class="t" style="left:36.70px;top:397.00px;font-size:11px;letter-spacing:0.349px;">Sharew...</span><span class="t" style="left:96.90px;top:397.00px;font-size:11px;letter-spacing:0.031px;">All Aboard!  Your weekly newsletter from Sh...</span><span class="t" style="left:337.00px;top:397.00px;font-size:11px;letter-spacing:-0.096px;">All Aboard</span><span class="t" style="left:526.00px;top:397.00px;font-size:11px;letter-spacing:0.230px;">nobody@efsoftware.c...</span><span class="t" style="left:682.94px;top:397.00px;font-size:11px;">83.212</span><div style="left:725px;top:395px;width:43px;height:17px;overflow:hidden"><span class="t" style="left:5.10px;top:2.00px;font-size:11px;letter-spacing:0.042px;">03.03.0</span></div><svg style="left:21px;top:413.6px" width="14" height="13" viewBox="0 0 14 13" ><g transform="translate(0,2.4)"><rect x=".5" y=".5" width="13" height="9" fill="url(#gEnv)" stroke="#6668cc"/><rect x="11" y="1.4" width="1.8" height="3" fill="#e23c3c"/><rect x="2" y="2" width="2.6" height="1.2" fill="#f28a8a"/></g><path d="M6 0 H8.2 V6.2 H10.6 L7.1 10.4 L3.6 6.2 H6Z" fill="#0606f2"/></svg><span class="t" style="left:36.70px;top:414.00px;font-size:11px;letter-spacing:0.349px;">Sharew...</span><span class="t" style="left:96.90px;top:414.00px;font-size:11px;letter-spacing:0.062px;">WSI #1 Internet Franchise Opportunity</span><span class="t" style="left:337.00px;top:414.00px;font-size:11px;letter-spacing:-0.059px;">sw365</span><span class="t" style="left:526.00px;top:414.00px;font-size:11px;letter-spacing:0.230px;">nobody@efsoftware.c...</span><span class="t" style="left:689.07px;top:414.00px;font-size:11px;">2.209</span><div style="left:725px;top:412px;width:43px;height:17px;overflow:hidden"><span class="t" style="left:5.10px;top:2.00px;font-size:11px;letter-spacing:0.042px;">03.03.0</span></div><svg style="left:21px;top:433px" width="14" height="10" viewBox="0 0 14 10" ><rect x=".5" y=".5" width="13" height="9" fill="url(#gEnv)" stroke="#6668cc"/><rect x="11" y="1.4" width="1.8" height="3" fill="#e23c3c"/><rect x="2" y="2" width="2.6" height="1.2" fill="#f28a8a"/><rect x="5" y="4.6" width="5" height="1.1" fill="#8a8a90"/></svg><span class="t" style="left:36.70px;top:431.00px;font-size:11px;letter-spacing:0.349px;">Sharew...</span><span class="t" style="left:96.90px;top:431.00px;font-size:11px;letter-spacing:-0.187px;">SWREG 1957604 - New Order for EF Proces...</span><span class="t" style="left:337.00px;top:431.00px;font-size:11px;letter-spacing:0.100px;">swreg.org</span><span class="t" style="left:526.00px;top:431.00px;font-size:11px;letter-spacing:0.230px;">nobody@efsoftware.c...</span><span class="t" style="left:689.07px;top:431.00px;font-size:11px;">1.962</span><div style="left:725px;top:429px;width:43px;height:17px;overflow:hidden"><span class="t" style="left:5.10px;top:2.00px;font-size:11px;letter-spacing:0.042px;">03.03.0</span></div><svg style="left:20.4px;top:446.4px" width="15" height="15" viewBox="0 0 15 15" ><circle cx="8" cy="8.2" r="5.6" fill="none" stroke="#8a8a8a" stroke-width="2" opacity=".6"/><circle cx="7" cy="7" r="5.6" fill="#fff" stroke="#ff2200" stroke-width="2.2"/><path d="M3.2 3.2 L10.8 10.8" stroke="#ff2200" stroke-width="2.2"/></svg><span class="t" style="left:36.70px;top:448.00px;font-size:11px;letter-spacing:0.349px;">Sharew...</span><span class="t" style="left:96.90px;top:448.00px;font-size:11px;letter-spacing:0.031px;">Save Up to 70% on Your Current Term Life I...</span><span class="t" style="left:337.00px;top:448.00px;font-size:11px;letter-spacing:-0.288px;">Marsha Wilson</span><span class="t" style="left:526.00px;top:448.00px;font-size:11px;letter-spacing:0.230px;">nobody@efsoftware.c...</span><span class="t" style="left:689.07px;top:448.00px;font-size:11px;">3.141</span><div style="left:725px;top:446px;width:43px;height:17px;overflow:hidden"><span class="t" style="left:5.10px;top:2.00px;font-size:11px;letter-spacing:0.042px;">03.03.0</span></div><svg style="left:21px;top:467px" width="14" height="10" viewBox="0 0 14 10" ><rect x=".5" y=".5" width="13" height="9" fill="url(#gEnv)" stroke="#6668cc"/><rect x="11" y="1.4" width="1.8" height="3" fill="#e23c3c"/><rect x="2" y="2" width="2.6" height="1.2" fill="#f28a8a"/><rect x="5" y="4.6" width="5" height="1.1" fill="#8a8a90"/></svg><span class="t" style="left:36.70px;top:465.00px;font-size:11px;letter-spacing:0.349px;">Sharew...</span><span class="t" style="left:96.90px;top:465.00px;font-size:11px;letter-spacing:-0.162px;">Your balance with Shophings</span><span class="t" style="left:337.00px;top:465.00px;font-size:11px;letter-spacing:-0.172px;">Shopthings Webmaster</span><span class="t" style="left:526.00px;top:465.00px;font-size:11px;letter-spacing:0.230px;">nobody@efsoftware.c...</span><span class="t" style="left:689.07px;top:465.00px;font-size:11px;">1.485</span><div style="left:725px;top:463px;width:43px;height:17px;overflow:hidden"><span class="t" style="left:5.10px;top:2.00px;font-size:11px;letter-spacing:0.042px;">03.03.0</span></div><div style="left:15px;top:536px;width:754px;height:17px;background:#fdfdfd"></div><div class="sbtrack" style="left:16px;top:536px;width:752px;height:16px"></div><div style="left:16px;top:536px;width:18px;height:16px;background:#e9ebec"></div><div style="left:750px;top:536px;width:18px;height:16px;background:#eceaea"></div><div class="sbthumb" style="left:34px;top:536px;width:674px;height:15px"></div><svg style="left:21px;top:539.5px" width="6" height="8" viewBox="0 0 6 8"><path d="M5 .3L.6 4L5 7.7Z" fill="#fff" transform="translate(-.6,.6)" opacity=".8"/><path d="M5 .3L.6 4L5 7.7Z" fill="#3c3c3c"/></svg><svg style="left:756.5px;top:539.5px" width="6" height="8" viewBox="0 0 6 8"><path d="M1 .3L5.4 4L1 7.7Z" fill="#fff" transform="translate(.6,.6)" opacity=".8"/><path d="M1 .3L5.4 4L1 7.7Z" fill="#3c3c3c"/></svg><div style="left:367px;top:540px;width:2px;height:7px;background:linear-gradient(90deg,#4a4a4c 0,#4a4a4c 50%,#f4f4f6 50%,#f4f4f6 100%)"></div><div style="left:370px;top:540px;width:2px;height:7px;background:linear-gradient(90deg,#4a4a4c 0,#4a4a4c 50%,#f4f4f6 50%,#f4f4f6 100%)"></div><div style="left:373px;top:540px;width:2px;height:7px;background:linear-gradient(90deg,#4a4a4c 0,#4a4a4c 50%,#f4f4f6 50%,#f4f4f6 100%)"></div><div class="status" style="left:14px;top:554px;width:756px;height:23px"></div><div class="ssep" style="left:365px;top:556px;height:20px"></div><div class="ssep" style="left:716px;top:556px;height:20px"></div><svg style="left:720.5px;top:560.5px" width="18" height="14" viewBox="0 0 18 14" ><path d="M.7 6.9 L4 3.2 L9.9 4.5 L14.9 7.3 L10.6 11.9 L6.6 10.5Z" fill="#fafaff" stroke="#111" stroke-width=".9" stroke-dasharray="1.2 .5"/><path d="M2.9 6.9 L13.9 8" stroke="#7a6ae0" stroke-width=".9"/><path d="M6 4 L10.3 10.3" stroke="#a050e0" stroke-width=".9"/><path d="M8 7.4 L10.6 11.9" stroke="#b060e8" stroke-width=".5"/><path d="M2.6 1 H10.4" stroke="#0a0a0a" stroke-width="1.1"/><path d="M2.9 1.7 H10.3 L12 3.6 L4.6 2.8Z" fill="#f2c08a"/><path d="M10.3 .8 H15.3 L16.4 2.1 V6.2 L14.7 6.9 L11.4 5.6 L9 3.6Z" fill="#f0b87c" stroke="#0a0a0a" stroke-width=".9"/><path d="M11 3.4 L14.4 5.4" stroke="#b8c840" stroke-width="1.1"/><path d="M12.4 2 L15 3.6" stroke="#f8dcc0" stroke-width="1"/><path d="M1 8 L8.4 11.2 L8.8 12.8 L4.7 13.2 L1 11Z" fill="#f0b070" stroke="#0a0a0a" stroke-width=".9" stroke-dasharray="1.4 .5"/><path d="M2.6 9.6 L3.8 11.6 M4.6 10.2 L5.8 12.2 M6.6 10.9 L7.6 12.5" stroke="#fff" stroke-width=".7"/><path d="M1.4 7.6 L8.6 10.8" stroke="#7a2030" stroke-width=".8"/></svg><svg style="left:761px;top:567px" width="9" height="9" viewBox="0 0 9 9" ><rect x="6" y="0" width="1.6" height="1.6" fill="#b9b5b5"/><rect x="7" y="1" width="1" height="1" fill="#fff"/><rect x="3" y="3" width="1.6" height="1.6" fill="#b9b5b5"/><rect x="4" y="4" width="1" height="1" fill="#fff"/><rect x="6" y="3" width="1.6" height="1.6" fill="#b9b5b5"/><rect x="7" y="4" width="1" height="1" fill="#fff"/><rect x="0" y="6" width="1.6" height="1.6" fill="#b9b5b5"/><rect x="1" y="7" width="1" height="1" fill="#fff"/><rect x="3" y="6" width="1.6" height="1.6" fill="#b9b5b5"/><rect x="4" y="7" width="1" height="1" fill="#fff"/><rect x="6" y="6" width="1.6" height="1.6" fill="#b9b5b5"/><rect x="7" y="7" width="1" height="1" fill="#fff"/></svg><span class="t" style="left:15.60px;top:560.00px;font-size:11px;letter-spacing:0.140px;">Selected 3 mails, 86.719 bytes</span><span class="t" style="left:370.70px;top:560.00px;font-size:11px;letter-spacing:0.225px;">Total 15 mails, 148.112 bytes</span>
</body></html>
